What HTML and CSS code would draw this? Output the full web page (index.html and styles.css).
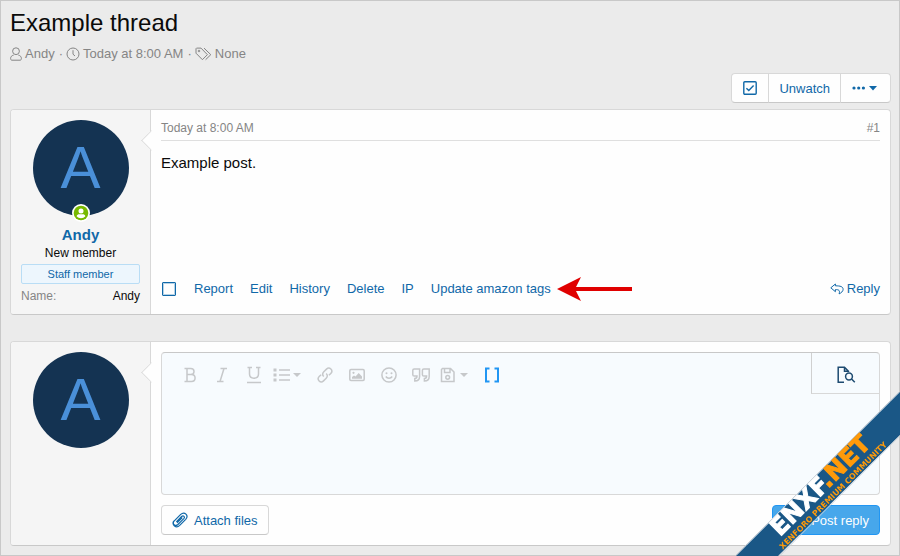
FILE: index.html
```html
<!DOCTYPE html>
<html lang="en">
<head>
    <meta charset="UTF-8">
    <meta name="viewport" content="width=device-width, initial-scale=1.0">
    <title>Example thread</title>
    <link rel="stylesheet" href="styles.css">
</head>
<body>
    <div class="page">
        <h1 class="title">Example thread</h1>
        <ul class="thread-info">
            <li>
                <svg class="icon-user" width="12" height="14" viewBox="0 0 12 14"><circle cx="6" cy="4.2" r="3.4"/><path d="M3.600 8.200C1.600 8.500.6 9.800.6 11.600c0 1 .5 1.600 1.400 1.600h8c.9 0 1.400-.6 1.400-1.600 0-1.800-1-3.100-3-3.400"/></svg>
                <a href="#">Andy</a>
            </li>
            <li>
                <svg width="14" height="14" viewBox="0 0 14 14"><circle cx="7" cy="7" r="6"/><path d="M7 3.2v4l2 1.8"/></svg>
                <a href="#">Today at 8:00 AM</a>
            </li>
            <li>
                <svg width="17" height="14" viewBox="0 0 17 14"><path d="M1 1.6v4.6l6.4 6.5 5-5L6 1.1H1.5zM9 1.1l6.8 6.6-5.2 5"/><circle cx="4" cy="4" r=".8"/></svg>
                <span>None</span>
            </li>
        </ul>

        <div class="thread-buttons">
            <button type="button" class="btn" aria-label="Select for moderation">
                <svg width="14" height="14" viewBox="0 0 14 14"><rect x=".8" y=".8" width="12.4" height="12.4" rx="1"/><path d="M3.4 7.2l2.4 2.4 4.8-5"/></svg>
            </button>
            <button type="button" class="btn">Unwatch</button>
            <button type="button" class="btn" aria-label="More options">
                <svg class="icon-solid" width="26" height="8" viewBox="0 0 26 8"><circle cx="2" cy="4" r="1.6"/><circle cx="6.7" cy="4" r="1.6"/><circle cx="11.4" cy="4" r="1.6"/><path d="M17 2h8l-4 4.4z"/></svg>
            </button>
        </div>

        <article class="message">
            <div class="message-user">
                <div class="avatar">A
                    <svg class="online" width="18" height="18" viewBox="0 0 18 18"><circle cx="9" cy="9" r="9" fill="#fff"/><circle cx="9" cy="9" r="7.3" fill="#77b900"/><circle cx="9" cy="7" r="2.5" fill="#fff"/><path d="M4.6 12.2c.5-1.3 1.5-1.9 2.6-1.9h3.6c1.1 0 2.1.6 2.6 1.9-1.100 1.300-2.700 2-4.400 2s-3.300-.7-4.400-2z" fill="#fff"/></svg>
                </div>
                <a class="username" href="#">Andy</a>
                <div class="user-title">New member</div>
                <div class="banner">Staff member</div>
                <dl class="user-extra">
                    <dt>Name:</dt>
                    <dd>Andy</dd>
                </dl>
            </div>
            <div class="message-main">
                <header class="message-header">
                    <a href="#">Today at 8:00 AM</a>
                    <a href="#">#1</a>
                </header>
                <div class="message-body">Example post.</div>
                <footer class="actions">
                    <input type="checkbox" class="select-post" aria-label="Select post">
                    <a href="#">Report</a>
                    <a href="#">Edit</a>
                    <a href="#">History</a>
                    <a href="#">Delete</a>
                    <a href="#">IP</a>
                    <div class="update-tags">
                        <a href="#">Update amazon tags</a>
                        <svg class="pointer" width="75" height="24" viewBox="0 0 75 24"><path d="M0 12L24 0l-5 10h56v4H19l5 10z" fill="#e00000"/></svg>
                    </div>
                    <a class="reply" href="#">
                        <svg width="14" height="12" viewBox="0 0 14 12"><path d="M5.400 1L.8 4.800l4.600 3.900V6.600c3.500-.1 4.800.8 3.700 4.300 2.200-1 4-2.700 4-4.500 0-2.900-2.700-3.500-7.700-3.600z"/></svg>
                        Reply
                    </a>
                </footer>
            </div>
        </article>

        <form class="message">
            <div class="message-user">
                <div class="avatar">A</div>
            </div>
            <div class="message-main">
                <div class="editor">
                    <div class="toolbar">
                        <button type="button" class="tool" aria-label="Bold">
                            <svg width="16" height="16" viewBox="0 0 16 16"><path d="M2.500 1.500h6.200c4.400 0 4.400 6 0 6H5h4.400c4.900 0 4.900 7 0 7H2.500M5 1.500v13"/></svg>
                        </button>
                        <button type="button" class="tool" aria-label="Italic">
                            <svg width="16" height="16" viewBox="0 0 16 16"><path d="M6.500 1.500H13M3 14.500h6.500M10 1.500l-4 13"/></svg>
                        </button>
                        <button type="button" class="tool" aria-label="Underline">
                            <svg width="16" height="18" viewBox="0 0 16 18"><path d="M1.500 1.500h4.500M10 1.500h4.500M3.500 1.500v6.500c0 5.500 9 5.500 9 0V1.500M1 16.500h14"/></svg>
                        </button>
                        <button type="button" class="tool tool-wide" aria-label="List">
                            <svg width="28" height="14" viewBox="0 0 28 14"><path d="M6 2h11M6 7h11M6 12h11"/><path class="fill" d="M.5.500h3v3h-3zM.500 5.500h3v3h-3zM.500 10.500h3v3h-3zM20 5h8l-4 4z"/></svg>
                        </button>
                        <button type="button" class="tool" aria-label="Insert link">
                            <svg width="16" height="16" viewBox="0 0 16 16"><path d="M6.800 9.500C5.300 8 5.300 6.300 6.800 4.800l2.700-2.700c3-2.900 7.200 1.300 4.300 4.300l-1.900 1.900M9.200 6.500c1.500 1.500 1.500 3.200 0 4.700l-2.700 2.700c-3 2.900-7.200-1.300-4.300-4.300l1.900-1.900"/></svg>
                        </button>
                        <button type="button" class="tool" aria-label="Insert image">
                            <svg width="16" height="14" viewBox="0 0 16 14"><rect x=".8" y="1.500" width="14.400" height="11" rx="1.200"/><path class="fill" d="M3 10.800V9l2-1.500 1.500 1L9.700 5l3.300 3.600v2.200z"/><circle class="fill" cx="4.500" cy="4.800" r="1.100"/></svg>
                        </button>
                        <button type="button" class="tool" aria-label="Smilies">
                            <svg width="16" height="16" viewBox="0 0 16 16"><circle cx="8" cy="8" r="7.100"/><path d="M4.800 9.500c1.500 2.400 4.900 2.400 6.400 0"/><circle class="fill" cx="5.500" cy="6.200" r="1"/><circle class="fill" cx="10.500" cy="6.200" r="1"/></svg>
                        </button>
                        <button type="button" class="tool" aria-label="Quote">
                            <svg width="18" height="14" viewBox="0 0 18 14"><path d="M7.600 1v7.500c0 3-1.700 4.500-4.800 4.500v-2.500c1.500 0 2.200-.6 2.200-2.500H2.200C1.300 8 .8 7.500.8 6.700V2.300C.8 1.500 1.300 1 2.200 1zM17.200 1v7.500c0 3-1.700 4.500-4.800 4.500v-2.500c1.500 0 2.200-.6 2.200-2.500h-2.800c-.9 0-1.400-.5-1.400-1.300V2.300c0-.8.5-1.300 1.400-1.300z"/></svg>
                        </button>
                        <button type="button" class="tool tool-wide" aria-label="Drafts">
                            <svg width="28" height="16" viewBox="0 0 28 16"><path d="M2.500 1.500h8l3.500 3.500v9.500H1.500v-12zM4.500 1.500v4h5.500v-4"/><circle cx="7.700" cy="10.300" r="1.900"/><path class="fill" d="M20 6h8l-4 4z"/></svg>
                        </button>
                        <button type="button" class="tool tool-active" aria-label="Toggle BB code">
                            <svg width="16" height="16" viewBox="0 0 16 16"><path d="M5.500 1.500H2v13h3.500M10.500 1.500H14v13h-3.500"/></svg>
                        </button>
                        <button type="button" class="preview" aria-label="Preview">
                            <svg width="20" height="18" viewBox="0 0 20 18"><path d="M8 16.200H2.200V1.200h6.300l4 4V6M8.500 1.200v4h4"/><circle cx="13" cy="10.500" r="3.400"/><path d="M15.500 13l3.300 3.300"/></svg>
                        </button>
                    </div>
                    <textarea class="editor-text" aria-label="Write your reply"></textarea>
                </div>
                <div class="form-buttons">
                    <button type="button" class="btn attach">
                        <svg width="16" height="16" viewBox="0 0 16 16"><path d="M4.300 9.800l5.300-5.300c1.800-1.600 3.800.4 2.200 2.100l-5.900 5.900c-2.700 2.500-6.200-.8-3.600-3.600l6.400-6.500c3.900-3.500 8.400 1.200 5 4.900l-6 6.100c-3.800 3.500-8.700-1.100-5.800-4.500M5 10.800l5.300-5.200"/></svg>
                        Attach files
                    </button>
                    <button type="submit" class="btn post">
                        <svg width="18" height="14" viewBox="0 0 14 12"><path d="M5.400 1L.8 4.800l4.600 3.900V6.600c3.500-.1 4.800.8 3.700 4.300 2.200-1 4-2.700 4-4.500 0-2.900-2.700-3.500-7.700-3.600z"/></svg>
                        Post reply
                    </button>
                </div>
            </div>
        </form>
    </div>

    <!-- Corner ribbon -->
    <svg class="ribbon" width="164" height="164" viewBox="0 0 164 164">
        <path d="M0 164L164 0v43L42 164z" fill="#1a5786"/>
        <path d="M-1 164L164-1M43 164.500L164.500 43" stroke="#c5ced6" fill="none"/>
        <g transform="translate(44 145) rotate(-45)">
            <text class="ribbon-name">ENXF<tspan class="ribbon-net">.NET</tspan></text>
            <text class="ribbon-slogan" x="-7" y="11">XENFORO PREMIUM COMMUNITY</text>
        </g>
    </svg>
</body>
</html>
```

FILE: styles.css
```css
* {
    box-sizing: border-box;
}

body {
    margin: 0;
    font-family: "Liberation Sans", Arial, sans-serif;
    font-size: 13px;
    color: #0a0a0a;
    background-color: #ebebeb;
}

a {
    color: #1068a8;
    text-decoration: none;
}

a:hover {
    text-decoration: underline;
}

button {
    font-family: inherit;
    cursor: pointer;
}

svg {
    flex: none;
    fill: none;
    stroke: currentColor;
}

.page {
    min-height: 100vh;
    padding: 8px 8px 9px 9px;
    border: 1px solid #c8c8c8;
}

.title {
    margin: 0;
    font-size: 24px;
    font-weight: normal;
    line-height: 28px;
}

.thread-info {
    display: flex;
    margin: 8px 0 10px;
    padding: 0;
    list-style: none;
    line-height: 18px;
    color: #858585;
}

.thread-info li {
    display: flex;
    align-items: center;
    gap: 3px;
}

.thread-info li + li::before {
    content: "·";
    margin-left: 4px;
}

.thread-info a {
    color: inherit;
}

.btn {
    display: flex;
    align-items: center;
    justify-content: center;
    height: 30px;
    padding: 0 10px;
    font-size: 13px;
    color: #1068a8;
    background-color: #fefefe;
    border: 1px solid #d8d8d8;
    border-bottom-color: #c8c8c8;
    border-radius: 4px;
}

.thread-buttons {
    display: flex;
    justify-content: flex-end;
    margin-bottom: 6px;
}

.thread-buttons .btn + .btn {
    margin-left: -1px;
    border-top-left-radius: 0;
    border-bottom-left-radius: 0;
}

.thread-buttons .btn:not(:last-child) {
    border-top-right-radius: 0;
    border-bottom-right-radius: 0;
}

.thread-buttons .btn:first-child {
    padding: 0 11px;
}

.thread-buttons svg {
    stroke-width: 1.4;
}

.icon-solid {
    fill: currentColor;
    stroke: none;
}

.thread-buttons .btn:last-child {
    padding: 0 12px 0 11px;
}

/* posts */

.message {
    display: flex;
    background-color: #fefefe;
    border: 1px solid #d8d8d8;
    border-bottom-color: #c8c8c8;
    border-radius: 4px;
}

.message + .message {
    margin-top: 26px;
}

.message-user {
    flex: none;
    width: 140px;
    padding: 10px;
    text-align: center;
    background-color: #f5f5f5;
    border-right: 1px solid #d8d8d8;
    border-radius: 3px 0 0 3px;
}

.avatar {
    position: relative;
    width: 96px;
    height: 96px;
    margin: 0 auto;
    font-size: 60px;
    line-height: 96px;
    color: #4a90d9;
    background-color: #143352;
    border-radius: 50%;
}

.online {
    position: absolute;
    left: 39px;
    bottom: -6px;
    stroke: none;
}

.username {
    display: block;
    margin-top: 9px;
    font-size: 15px;
    font-weight: bold;
    line-height: 20px;
}

.user-title {
    font-size: 12px;
    line-height: 16px;
}

.banner {
    margin: 3px 0 4px;
    font-size: 11px;
    line-height: 18px;
    color: #1068a8;
    background-color: #edf6fd;
    border: 1px solid #b9ddf5;
    border-radius: 2px;
}

.user-extra {
    display: flex;
    justify-content: space-between;
    margin: 0;
    font-size: 12px;
    line-height: 16px;
}

.user-extra dt {
    color: #858585;
}

.user-extra dd {
    margin: 0;
}

.message-main {
    position: relative;
    display: flex;
    flex: 1;
    flex-direction: column;
    min-width: 0;
    padding: 10px;
}

.message-main::before {
    content: "";
    position: absolute;
    top: 23px;
    left: -7px;
    width: 14px;
    height: 14px;
    background-color: #fefefe;
    border: solid #d8d8d8;
    border-width: 0 0 1px 1px;
    clip-path: polygon(0 0, 100% 100%, 0 100%);
    transform: rotate(45deg);
}

.message-header {
    display: flex;
    justify-content: space-between;
    padding-bottom: 4px;
    font-size: 12px;
    line-height: 16px;
    border-bottom: 1px solid #dfdfdf;
}

.message-header a {
    color: #858585;
}

.message-body {
    margin-top: 11px;
    font-size: 15px;
    line-height: 21px;
}

.actions {
    display: flex;
    align-items: center;
    gap: 17px;
    margin-top: auto;
    padding-bottom: 3px;
    line-height: 20px;
}

.select-post {
    width: 14px;
    height: 14px;
    margin: 0 1px;
    appearance: none;
    border: 1px solid #1068a8;
    border-radius: 1px;
    box-shadow: inset 0 0 0 1px #b5d2e6;
}

.select-post:checked {
    background-color: #1068a8;
}

.update-tags {
    display: flex;
    align-items: center;
    gap: 6px;
}

.pointer {
    stroke: none;
}

.reply {
    display: flex;
    align-items: center;
    gap: 3px;
    margin-left: auto;
}

/* editor */

.editor {
    display: flex;
    flex-direction: column;
    background-color: #f7fbfe;
    border: 1px solid #d8d8d8;
    border-top-color: #c8c8c8;
    border-radius: 4px;
}

.toolbar {
    display: flex;
    height: 44px;
    padding-left: 12px;
}

.tool,
.preview {
    display: flex;
    align-items: center;
    justify-content: center;
    padding: 0;
    background: none;
    border: 0;
}

.tool {
    width: 32px;
    color: #c6c8ca;
}

.tool svg,
.preview svg {
    stroke-width: 1.5;
}

.tool .fill {
    fill: currentColor;
    stroke: none;
}

.tool-wide {
    width: 39px;
    padding-right: 5px;
}

.tool-active {
    color: #2196f3;
}

.tool-active svg {
    stroke-width: 2;
}

.preview {
    width: 68px;
    height: 41px;
    padding-top: 3px;
    margin-left: auto;
    color: #1d4a70;
    border-left: 1px solid #d0d0d0;
    border-bottom: 1px solid #d8d8d8;
}

.editor-text {
    height: 97px;
    padding: 6px 12px;
    font-family: inherit;
    font-size: 15px;
    background: none;
    border: 0;
    outline: none;
    resize: none;
}

.form-buttons {
    display: flex;
    justify-content: space-between;
    margin-top: 10px;
}

.attach,
.post {
    gap: 6px;
}

.attach svg {
    stroke-width: 1.2;
}

.post {
    gap: 10px;
    color: #fefefe;
    background-color: #47a7eb;
    border-color: #2196f3;
}

.ribbon {
    position: fixed;
    right: 0;
    bottom: 0;
    stroke: none;
    pointer-events: none;
}

.ribbon-name {
    font-family: "DejaVu Sans", sans-serif;
    font-size: 24px;
    font-weight: bold;
    fill: #fff;
    stroke: #fff;
}

.ribbon-net {
    fill: #ff9a0a;
    stroke: #ff9a0a;
}

.ribbon-slogan {
    font-family: "DejaVu Sans", sans-serif;
    font-size: 8px;
    font-weight: bold;
    fill: #ff9a0a;
}
```
